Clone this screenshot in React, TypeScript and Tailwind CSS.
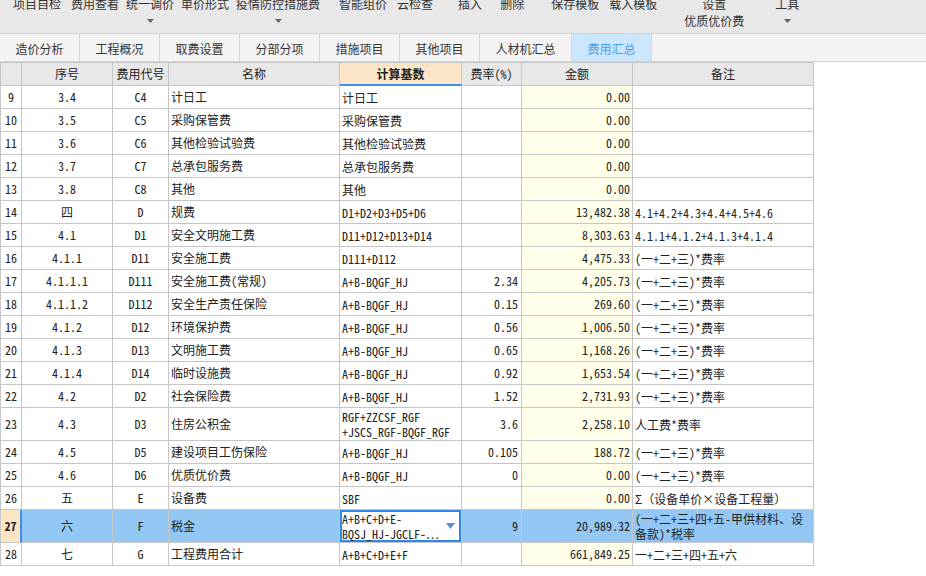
import clsx from 'clsx';

type Row = {
  no: number;
  seq: string;
  code: string;
  name: string;
  base: string[];
  rate?: string;
  amount: string;
  note: string[];
  tall?: boolean;
  selected?: boolean;
};

const TOOLS: Array<{ label: string; ml: string; sub?: string; arrow?: boolean }> = [
  { label: '项目自检', ml: 'ml-[13px]' },
  { label: '费用查看', ml: 'ml-[10px]' },
  { label: '统一调价', ml: 'ml-[7px]', arrow: true },
  { label: '单价形式', ml: 'ml-[7px]' },
  { label: '疫情防控措施费', ml: 'ml-[7px]', arrow: true },
  { label: '智能组价', ml: 'ml-[19px]' },
  { label: '云检查', ml: 'ml-[10px]' },
  { label: '插入', ml: 'ml-[25px]' },
  { label: '删除', ml: 'ml-[18px]' },
  { label: '保存模板', ml: 'ml-[27px]' },
  { label: '载入模板', ml: 'ml-[10px]' },
  { label: '设置', ml: 'ml-[27px]', sub: '优质优价费' },
  { label: '工具', ml: 'ml-[31px]', arrow: true },
];

const TABS = [
  { label: '造价分析', w: 'w-[80px]' },
  { label: '工程概况', w: 'w-[80px]' },
  { label: '取费设置', w: 'w-[80px]' },
  { label: '分部分项', w: 'w-[80px]' },
  { label: '措施项目', w: 'w-[80px]' },
  { label: '其他项目', w: 'w-[80px]' },
  { label: '人材机汇总', w: 'w-[92px]' },
  { label: '费用汇总', w: 'w-[80px]', active: true },
];

const F = '(一+二+三)*费率';
const HJ = ['A+B-BQGF_HJ'];

const ROWS: Row[] = [
  { no: 9, seq: '3.4', code: 'C4', name: '计日工', base: ['计日工'], amount: '0.00', note: [] },
  { no: 10, seq: '3.5', code: 'C5', name: '采购保管费', base: ['采购保管费'], amount: '0.00', note: [] },
  { no: 11, seq: '3.6', code: 'C6', name: '其他检验试验费', base: ['其他检验试验费'], amount: '0.00', note: [] },
  { no: 12, seq: '3.7', code: 'C7', name: '总承包服务费', base: ['总承包服务费'], amount: '0.00', note: [] },
  { no: 13, seq: '3.8', code: 'C8', name: '其他', base: ['其他'], amount: '0.00', note: [] },
  { no: 14, seq: '四', code: 'D', name: '规费', base: ['D1+D2+D3+D5+D6'], amount: '13,482.38', note: ['4.1+4.2+4.3+4.4+4.5+4.6'] },
  { no: 15, seq: '4.1', code: 'D1', name: '安全文明施工费', base: ['D11+D12+D13+D14'], amount: '8,303.63', note: ['4.1.1+4.1.2+4.1.3+4.1.4'] },
  { no: 16, seq: '4.1.1', code: 'D11', name: '安全施工费', base: ['D111+D112'], amount: '4,475.33', note: [F] },
  { no: 17, seq: '4.1.1.1', code: 'D111', name: '安全施工费(常规)', base: HJ, rate: '2.34', amount: '4,205.73', note: [F] },
  { no: 18, seq: '4.1.1.2', code: 'D112', name: '安全生产责任保险', base: HJ, rate: '0.15', amount: '269.60', note: [F] },
  { no: 19, seq: '4.1.2', code: 'D12', name: '环境保护费', base: HJ, rate: '0.56', amount: '1,006.50', note: [F] },
  { no: 20, seq: '4.1.3', code: 'D13', name: '文明施工费', base: HJ, rate: '0.65', amount: '1,168.26', note: [F] },
  { no: 21, seq: '4.1.4', code: 'D14', name: '临时设施费', base: HJ, rate: '0.92', amount: '1,653.54', note: [F] },
  { no: 22, seq: '4.2', code: 'D2', name: '社会保险费', base: HJ, rate: '1.52', amount: '2,731.93', note: [F] },
  { no: 23, seq: '4.3', code: 'D3', name: '住房公积金', base: ['RGF+ZZCSF_RGF', '+JSCS_RGF-BQGF_RGF'], rate: '3.6', amount: '2,258.10', note: ['人工费*费率'], tall: true },
  { no: 24, seq: '4.5', code: 'D5', name: '建设项目工伤保险', base: HJ, rate: '0.105', amount: '188.72', note: [F] },
  { no: 25, seq: '4.6', code: 'D6', name: '优质优价费', base: HJ, rate: '0', amount: '0.00', note: [F] },
  { no: 26, seq: '五', code: 'E', name: '设备费', base: ['SBF'], amount: '0.00', note: ['Σ（设备单价×设备工程量）'] },
  { no: 27, seq: '六', code: 'F', name: '税金', base: ['A+B+C+D+E-', 'BQSJ_HJ-JGCLF-…'], rate: '9', amount: '20,989.32', note: ['(一+二+三+四+五-甲供材料、设', '备款)*税率'], tall: true, selected: true },
  { no: 28, seq: '七', code: 'G', name: '工程费用合计', base: ['A+B+C+D+E+F'], amount: '661,849.25', note: ['一+二+三+四+五+六'] },
];

const GRID = 'grid grid-cols-[21px_91px_56px_171px_122px_60px_111px_181px]';
const CELL = 'border-r border-b border-[#c6c6c6] flex items-center overflow-hidden whitespace-nowrap';

function Lines({ lines }: { lines: string[] }) {
  return (
    <div className="leading-[15px]">
      {lines.map((l, i) => (
        <div key={i}>{l}</div>
      ))}
    </div>
  );
}

function Caret() {
  return (
    <svg width="7" height="4" viewBox="0 0 7 4" className="block">
      <path d="M0 0h7L3.5 4z" fill="#666" />
    </svg>
  );
}

export default function App() {
  return (
    <div className="w-[926px] h-[576px] overflow-hidden bg-white text-[#222] font-['Noto_Sans_CJK_SC',sans-serif]">
      {/* 工具栏 */}
      <div className="h-[34px] bg-[#e8e8e8] border-b border-[#d2d2d2] overflow-hidden">
        <div className="flex items-start mt-[-5px] text-[12px] text-[#333]">
          {TOOLS.map((t) => (
            <div key={t.label} className={clsx('flex flex-col items-center whitespace-nowrap', t.ml)}>
              <div className="leading-[17px]">{t.label}</div>
              <div className="h-[17px] leading-[17px] flex items-center">
                {t.sub ? t.sub : t.arrow ? <Caret /> : null}
              </div>
            </div>
          ))}
        </div>
      </div>

      {/* 页签 */}
      <div className="h-[28px] bg-[#f3f3f3] border-b border-[#d2d2d2] flex text-[12px] text-[#333]">
        {TABS.map((t) => (
          <div
            key={t.label}
            className={clsx(
              'h-full border-r border-[#d6d6d6] flex items-center justify-center pt-[2px]',
              t.w,
              t.active && 'bg-[#cce6fd] text-[#4a9be6]'
            )}
          >
            {t.label}
          </div>
        ))}
      </div>

      {/* 表格 */}
      <div className="w-[814px] border-l border-t border-[#c6c6c6] text-[12px] font-['Noto_Sans_Mono_CJK_SC','Noto_Sans_CJK_SC',monospace]">
        <div className={clsx(GRID, 'h-[23px] bg-[#e8e8e8] text-[#222]')}>
          <div className={CELL} />
          <div className={clsx(CELL, 'justify-center')}>序号</div>
          <div className={clsx(CELL, 'justify-center')}>费用代号</div>
          <div className={clsx(CELL, 'justify-center')}>名称</div>
          <div className={clsx(CELL, 'justify-center bg-[#fde6c8] font-bold border-b-2 border-b-[#3d8ef0]')}>计算基数</div>
          <div className={clsx(CELL, 'justify-center')}>费率(%)</div>
          <div className={clsx(CELL, 'justify-center')}>金额</div>
          <div className={clsx(CELL, 'justify-center')}>备注</div>
        </div>

        {ROWS.map((r) => {
          const sel = r.selected;
          return (
            <div
              key={r.no}
              className={clsx(GRID, r.tall ? 'h-[33px]' : 'h-[23px]', sel && 'bg-[#93c7f4]')}
            >
              <div
                className={clsx(
                  CELL,
                  'justify-center',
                  sel ? 'bg-[#fde4c3] font-bold border-r-2 border-r-[#3d8ef0]' : 'bg-white'
                )}
              >
                {r.no}
              </div>
              <div className={clsx(CELL, 'justify-center')}>{r.seq}</div>
              <div className={clsx(CELL, 'justify-center')}>{r.code}</div>
              <div className={clsx(CELL, 'pl-[2px]')}>{r.name}</div>
              <div
                className={clsx(
                  CELL,
                  'pl-[2px] justify-between',
                  sel && 'bg-white shadow-[inset_0_0_0_2px_#2f86ec] pr-[6px]'
                )}
              >
                <Lines lines={r.base} />
                {sel && (
                  <svg width="9" height="6" viewBox="0 0 9 6" className="block">
                    <path d="M0 0h9L4.5 6z" fill="#5c8fcf" />
                  </svg>
                )}
              </div>
              <div className={clsx(CELL, 'justify-end pr-[3px]')}>{r.rate}</div>
              <div className={clsx(CELL, 'justify-end pr-[2px]', !sel && 'bg-[#ffffea]')}>{r.amount}</div>
              <div className={clsx(CELL, 'pl-[2px]')}>
                <Lines lines={r.note} />
              </div>
            </div>
          );
        })}
      </div>
    </div>
  );
}
